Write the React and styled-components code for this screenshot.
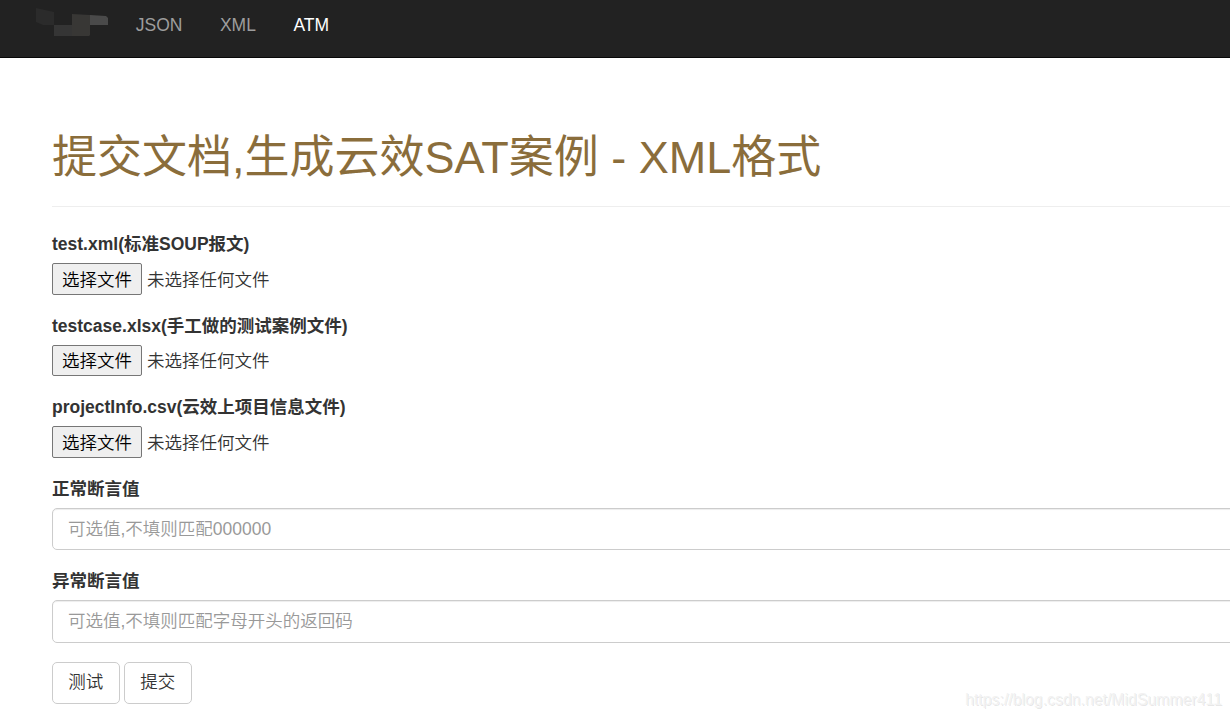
import React from "react";
import styled, { createGlobalStyle } from "styled-components";

const GlobalStyle = createGlobalStyle`
  * {
    box-sizing: border-box;
  }

  body {
    margin: 0;
    overflow: hidden;
    background: #ffffff;
    color: #333333;
    font-family: "Liberation Sans", "Noto Sans CJK SC", sans-serif;
    font-size: 17.5px;
    font-weight: 350;
    line-height: 25px;
  }
`;

const Page = styled.div`
  position: relative;
  height: 718px;
  overflow: hidden;
`;

const Navbar = styled.nav`
  display: flex;
  align-items: flex-start;
  height: 58px;
  padding-left: 36px;
  background: #222222;
  border-bottom: 1px solid #080808;
`;

const Brand = styled.svg`
  display: block;
  width: 72px;
  height: 29px;
  margin: 8px 9px 0 0;
`;

const NavLink = styled.a`
  padding: 13px 18.75px 12px;
  color: ${p => (p.$active ? "#ffffff" : "#9d9d9d")};
  text-decoration: none;
`;

const Container = styled.main`
  width: 1330px;
  padding: 75px 0 0 52px;
`;

const PageHeader = styled.header`
  height: 74px;
  margin-bottom: 25px;
  border-bottom: 1px solid #eeeeee;
`;

const Title = styled.h1`
  margin: 0;
  color: #8a6d3b;
  font-size: 45px;
  font-weight: 400;
  line-height: 50px;
`;

const FormGroup = styled.div`
  margin-bottom: 18.75px;
`;

const Label = styled.label`
  display: block;
  margin-bottom: 6.25px;
  font-weight: 700;
`;

const FileRow = styled.div`
  display: flex;
  align-items: center;
  gap: 5px;
  height: 31.5px;
`;

const FileButton = styled.button`
  width: 90px;
  height: 31.5px;
  padding: 2px 0 0;
  background: #efefef;
  border: 1px solid #767676;
  border-radius: 2px;
  color: #000000;
  font: inherit;
`;

const FileStatus = styled.span`
  padding-top: 2px;
`;

const Input = styled.input`
  display: block;
  width: 100%;
  height: 42.5px;
  padding: 7.5px 15px;
  background: #ffffff;
  border: 1px solid #cccccc;
  border-radius: 5px;
  box-shadow: inset 0 1px 1px rgba(0, 0, 0, 0.075);
  font: inherit;

  &::placeholder {
    color: #999999;
    opacity: 1;
  }
`;

const Actions = styled.div`
  display: flex;
  gap: 4.5px;
`;

const Button = styled.button`
  width: 67.5px;
  height: 42.5px;
  padding: 0;
  background: #ffffff;
  border: 1px solid #cccccc;
  border-radius: 5px;
  color: #333333;
  font: inherit;
`;

const Watermark = styled.span`
  position: absolute;
  right: 8px;
  bottom: 6px;
  color: #f2f2f2;
  font-size: 15.85px;
  line-height: 24px;
  text-shadow: 1px 1px 0 rgba(0, 0, 0, 0.1);
`;

const links = ["JSON", "XML", "ATM"];

const files = [
  "test.xml(标准SOUP报文)",
  "testcase.xlsx(手工做的测试案例文件)",
  "projectInfo.csv(云效上项目信息文件)",
];

const fields = [
  { label: "正常断言值", placeholder: "可选值,不填则匹配000000" },
  { label: "异常断言值", placeholder: "可选值,不填则匹配字母开头的返回码" },
];

export default function App() {
  return (
    <Page>
      <GlobalStyle />
      <Navbar>
        <Brand viewBox="0 0 72 29">
          <path d="M0 0L18 4V17H7L0 14Z" fill="#2b2b2b" />
          <path d="M18 17H36V28H18Z" fill="#353535" />
          <path d="M36 6L54 7V27L53 28H36Z" fill="#383735" />
          <path d="M54 7L70 8L72 10V17H54Z" fill="#4a4a4a" />
        </Brand>
        {links.map(link => (
          <NavLink key={link} $active={link === "ATM"}>
            {link}
          </NavLink>
        ))}
      </Navbar>
      <Container>
        <PageHeader>
          <Title>提交文档,生成云效SAT案例 - XML格式</Title>
        </PageHeader>
        {files.map(name => (
          <FormGroup key={name}>
            <Label>{name}</Label>
            <FileRow>
              <FileButton type="button">选择文件</FileButton>
              <FileStatus>未选择任何文件</FileStatus>
            </FileRow>
          </FormGroup>
        ))}
        {fields.map(({ label, placeholder }) => (
          <FormGroup key={label}>
            <Label>{label}</Label>
            <Input placeholder={placeholder} />
          </FormGroup>
        ))}
        <Actions>
          <Button type="button">测试</Button>
          <Button type="submit">提交</Button>
        </Actions>
      </Container>
      <Watermark>https://blog.csdn.net/MidSummer411</Watermark>
    </Page>
  );
}
